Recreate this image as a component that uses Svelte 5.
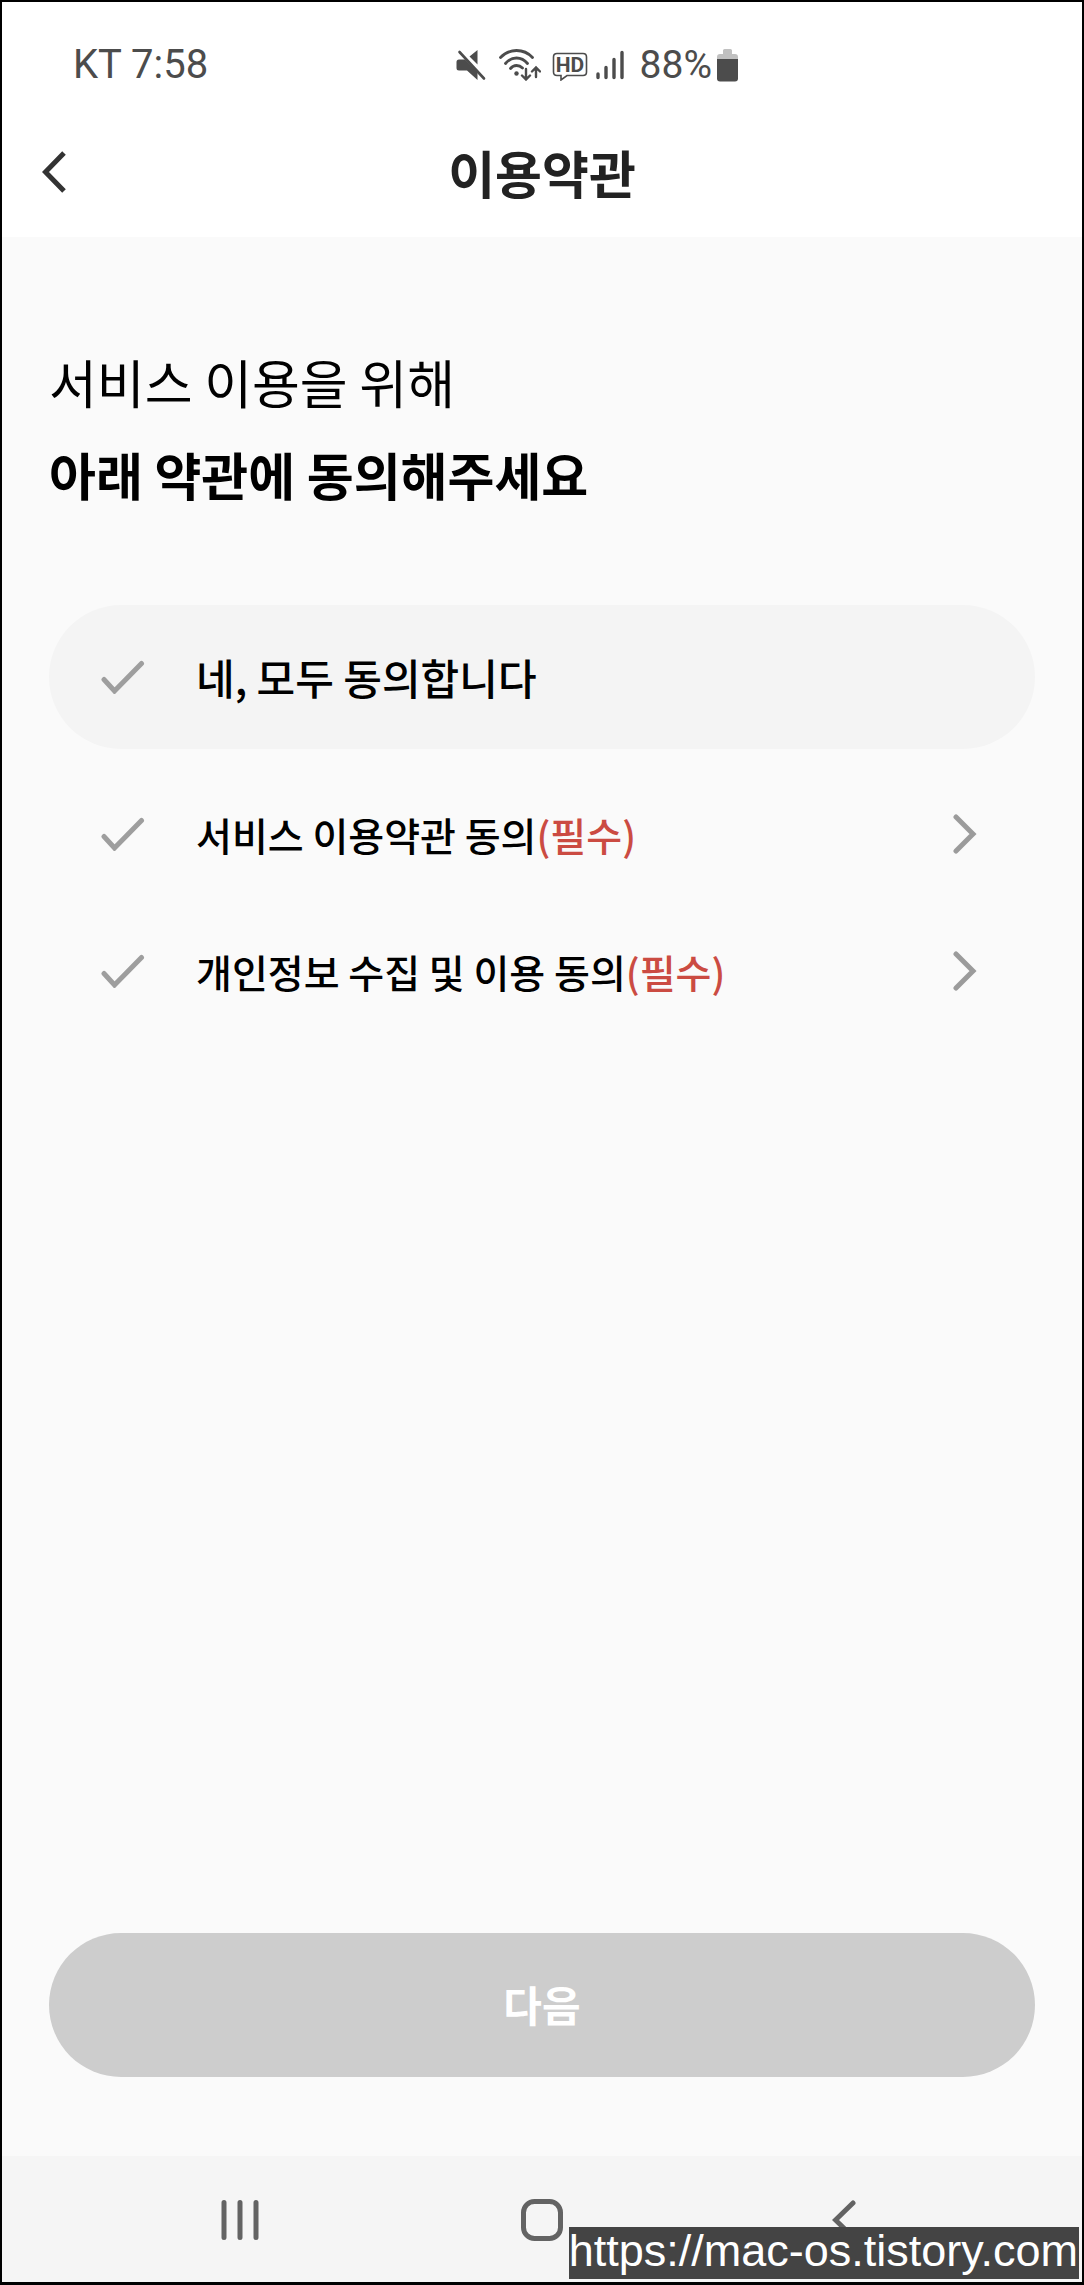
<script>
  let terms = $state([
    { id: 'service', label: '서비스 이용약관 동의', href: '#service', agreed: false },
    { id: 'privacy', label: '개인정보 수집 및 이용 동의', href: '#privacy', agreed: false },
  ])

  let allAgreed = $derived(terms.every((term) => term.agreed))

  function toggleAll(event) {
    for (const term of terms) term.agreed = event.currentTarget.checked
  }
</script>

{#snippet check()}
  <svg width="44" height="34" viewBox="0 0 44 34" aria-hidden="true">
    <path d="M3 19.5 13.5 31 40.5 3.5" />
  </svg>
{/snippet}

<div class="screen">
  <div class="status">
    <span class="clock">KT 7:58</span>
    <div class="indicators">
      <svg class="mute" width="30" height="32" viewBox="0 0 30 32" aria-hidden="true">
        <path class="fill" d="M13.5 7.5 21.5 1v14.5zM3 10.5h6L21.5 23v8L11 21.5H3q-2.5 0-2.5-2.5v-6Q.5 10.5 3 10.5z" />
        <path d="M3.5 3 28 29.5" stroke-width="2.6" />
      </svg>
      <svg class="wifi" width="42" height="32" viewBox="0 0 42 32" aria-hidden="true">
        <path d="M1.5 8.5Q8 1.5 17.5 1.5T33.5 8.5M6.5 14.5Q11 9 17.5 9T28.5 14.5M11.5 19.5Q14 16.5 17.5 16.5 21 16.5 23.5 19" stroke-width="2.8" />
        <circle class="fill" cx="17.5" cy="24.5" r="2.2" />
        <path d="M27 20v10M23 26.5l4 4 4-4M37 28V18.5M33 22.5l4-4 4 4" stroke-width="2.4" />
      </svg>
      <svg class="hd" width="36" height="32" viewBox="0 0 36 32" aria-hidden="true">
        <path d="M5 4.5h26q3.500 0 3.500 3.500v15q0 3.500-3.500 3.500H15L9 31v-4.500H5Q1.500 26.500 1.500 23V8Q1.500 4.500 5 4.500z" stroke-width="1.6" />
        <text x="18" y="23" text-anchor="middle">HD</text>
      </svg>
      <svg class="signal" width="28" height="32" viewBox="0 0 28 32" aria-hidden="true">
        <path d="M2 25v3.500M10 18.500v10M18 10.500v18M26 3.500v25" stroke-width="3.4" />
      </svg>
      <span class="percent">88%</span>
      <svg class="battery" width="21" height="33" viewBox="0 0 21 33" aria-hidden="true">
        <path class="pale" d="M6 1.5Q6 0 7.5 0h6Q15 0 15 1.5V5h3q3 0 3 3v3H0V8q0-3 3-3h3z" />
        <path class="fill" d="M0 10h21v19.5q0 3-3 3H3q-3 0-3-3z" />
      </svg>
    </div>
  </div>

  <header>
    <button class="back" type="button" aria-label="뒤로">
      <svg width="24" height="42" viewBox="0 0 24 42" aria-hidden="true">
        <path d="M22 2 3.5 21 22 40" />
      </svg>
    </button>
    <h1>이용약관</h1>
  </header>

  <main>
    <h2>
      <span>서비스 이용을 위해</span>
      <strong>아래 약관에 동의해주세요</strong>
    </h2>

    <form onsubmit={(event) => event.preventDefault()}>
      <label class="agree all">
        <input type="checkbox" checked={allAgreed} onchange={toggleAll} />
        {@render check()}
        <span>네, 모두 동의합니다</span>
      </label>

      <ul>
        {#each terms as term (term.id)}
          <li>
            <label class="agree">
              <input type="checkbox" bind:checked={term.agreed} />
              {@render check()}
              <span>{term.label}<em>(필수)</em></span>
            </label>
            <a href={term.href} aria-label="{term.label} 보기">
              <svg width="24" height="40" viewBox="0 0 24 40" aria-hidden="true">
                <path d="M3 3l17 17L3 37" />
              </svg>
            </a>
          </li>
        {/each}
      </ul>

      <button class="next" type="submit" disabled={!allAgreed}>다음</button>
    </form>
  </main>

  <nav aria-label="시스템 탐색">
    <button type="button" aria-label="최근 앱">
      <svg width="40" height="42" viewBox="0 0 40 42" aria-hidden="true">
        <path d="M4 3.5v35M20 3.5v35M36 3.5v35" />
      </svg>
    </button>
    <button type="button" aria-label="홈">
      <svg width="42" height="42" viewBox="0 0 42 42" aria-hidden="true">
        <rect x="2.5" y="2.5" width="37" height="37" rx="11" />
      </svg>
    </button>
    <button type="button" aria-label="뒤로">
      <svg width="24" height="42" viewBox="0 0 24 42" aria-hidden="true">
        <path d="M21 4 3.5 21 21 38" />
      </svg>
    </button>
  </nav>

  <a class="watermark" href="https://mac-os.tistory.com">https://mac-os.tistory.com</a>
</div>

<style>
  :global(body) {
    margin: 0;
  }

  .screen {
    position: relative;
    display: flex;
    flex-direction: column;
    box-sizing: border-box;
    min-height: 100vh;
    border: 2px solid #000;
    border-bottom-width: 3px;
    background: #fafafa;
    color: #000;
    font-family: 'Noto Sans CJK KR', sans-serif;
  }

  svg {
    display: block;
    flex: none;
    fill: none;
    stroke: currentColor;
    stroke-linecap: round;
  }

  button {
    padding: 0;
    border: 0;
    background: none;
    color: inherit;
    font-family: inherit;
    cursor: pointer;
  }

  .status {
    display: grid;
    grid-template-columns: 42% 1fr;
    align-items: center;
    padding-top: 39px;
    background: #fff;
    color: #4c4c4c;
    font-family: Roboto, sans-serif;
    font-size: 39px;
    line-height: 48px;
  }

  .clock {
    padding-left: 71px;
    font-size: 40px;
  }

  .indicators {
    display: flex;
    align-items: center;
  }

  .fill {
    fill: currentColor;
    stroke: none;
  }

  .pale {
    fill: #c0c0c0;
    stroke: none;
  }

  .wifi {
    margin-left: 13px;
  }

  .hd {
    margin-left: 11px;
  }

  .hd text {
    fill: currentColor;
    stroke: none;
    font-size: 21px;
    font-weight: 700;
  }

  .signal {
    margin-left: 8px;
  }

  .percent {
    margin-left: 16px;
  }

  .battery {
    margin-left: 5px;
  }

  header {
    display: grid;
    grid-template-columns: 104px 1fr 104px;
    align-items: center;
    height: 148px;
    padding-top: 17px;
    box-sizing: border-box;
    background: #fff;
    color: #222;
  }

  .back {
    padding: 20px 40px;
  }

  .back svg {
    stroke: #333;
    stroke-width: 5;
    stroke-linecap: butt;
  }

  h1 {
    margin: 0;
    font-size: 51px;
    font-weight: 700;
    line-height: 72px;
    text-align: center;
  }

  main {
    display: flex;
    flex: 1;
    flex-direction: column;
    padding: 99px 47px 79px;
  }

  h2 {
    margin: 0 0 85px;
    font-size: 52px;
    font-weight: 400;
    line-height: 92px;
  }

  h2 span,
  h2 strong {
    display: block;
  }

  h2 strong {
    font-size: 51px;
    font-weight: 700;
  }

  form {
    display: flex;
    flex: 1;
    flex-direction: column;
  }

  .agree {
    display: flex;
    flex: 1;
    gap: 51px;
    align-items: center;
    padding-left: 52px;
    font-size: 39px;
    font-weight: 500;
    line-height: 56px;
    cursor: pointer;
  }

  .agree.all {
    flex: none;
    height: 144px;
    border-radius: 72px;
    background: #f4f4f4;
    font-size: 42px;
  }

  .agree input {
    position: absolute;
    width: 44px;
    height: 34px;
    margin: 0;
    appearance: none;
    cursor: pointer;
  }

  .agree svg {
    stroke: #9e9e9e;
    stroke-width: 5;
  }

  .agree input:checked + svg {
    stroke: #cb4b42;
  }

  em {
    color: #cb4b42;
    font-style: normal;
  }

  ul {
    margin: 16px 0 0;
    padding: 0;
    list-style: none;
  }

  li {
    display: flex;
    align-items: center;
    height: 137px;
    padding-right: 58px;
  }

  li a {
    color: #9b9b9b;
  }

  li a svg {
    stroke-width: 5;
  }

  .next {
    height: 144px;
    margin-top: auto;
    padding-bottom: 3px;
    border-radius: 72px;
    background: #333;
    color: #fff;
    font-size: 42px;
    font-weight: 700;
  }

  .next:disabled {
    background: #cdcdcd;
    cursor: default;
  }

  nav {
    display: grid;
    grid-template-columns: repeat(3, 1fr);
    height: 126px;
    padding: 0 8%;
    background: #f5f5f5;
    color: #636363;
  }

  nav button {
    display: grid;
    place-items: center;
    padding-top: 2px;
  }

  nav svg {
    stroke-width: 5;
  }

  .watermark {
    position: absolute;
    right: 3px;
    bottom: 3px;
    padding: 0 1px 4px 0;
    background: #444;
    color: #fff;
    font-family: 'Liberation Sans', Arial, sans-serif;
    font-size: 45px;
    line-height: 48px;
    text-decoration: none;
  }
</style>
